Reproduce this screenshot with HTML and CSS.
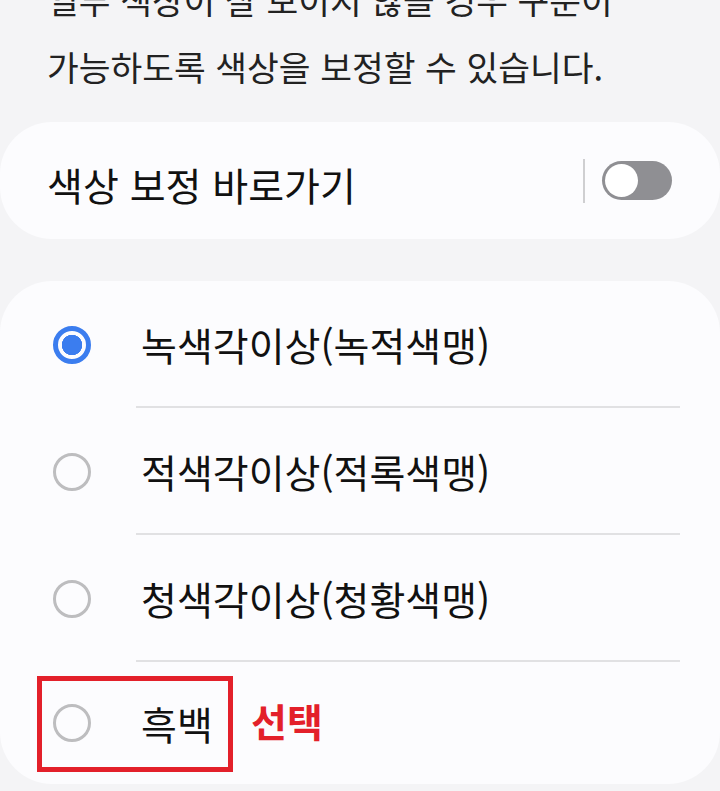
FILE: index.html
```html
<!DOCTYPE html>
<html lang="ko">
    <head>
        <title>색상 보정</title>
        <meta charset="utf-8">
        <link rel="stylesheet" href="styles.css">
    </head>
    <body>
        <p class="desc">일부 색상이 잘 보이지 않을 경우 구분이<br>가능하도록 색상을 보정할 수 있습니다.</p>

        <div class="card shortcut">
            <div class="shortcut_title">색상 보정 바로가기</div>
            <div class="sep"></div>
            <div class="switch"><div class="knob"></div></div>
        </div>

        <div class="card options">
            <div class="row">
                <div class="radio checked"></div>
                <div class="label">녹색각이상(녹적색맹)</div>
            </div>
            <div class="row">
                <div class="radio"></div>
                <div class="label">적색각이상(적록색맹)</div>
            </div>
            <div class="row">
                <div class="radio"></div>
                <div class="label">청색각이상(청황색맹)</div>
            </div>
            <div class="row last">
                <div class="radio"></div>
                <div class="label">흑백</div>
                <!-- 표시용 -->
                <div class="mark_box"></div>
                <div class="mark_text">선택</div>
            </div>
        </div>
    </body>
</html>
```

FILE: styles.css
```css
body{
    margin: 0;
    background-color: #f4f4f6;
    font-family: "Noto Sans CJK KR", "Noto Sans", sans-serif;
    color: #111;
    overflow: hidden;
}

p.desc{
    margin: -34px 0 0 0;
    padding: 0 0 0 47px;
    font-size: 34.5px;
    line-height: 67px;
    color: #222;
    white-space: nowrap;
}

div.card{
    background-color: #fcfcfe;
    border-radius: 52px;
}

/*바로가기*/
div.shortcut{
    margin-top: 22px;
    height: 117px;
    padding: 0 48px 0 47px;
    display: flex;
    align-items: center;
}
div.shortcut_title{
    flex: 1;
    font-size: 39px;
    padding-top: 6px;
}
div.sep{
    width: 2px;
    height: 44px;
    background-color: #cfcfd1;
    margin-right: 17px;
}
div.switch{
    width: 70px;
    height: 39px;
    border-radius: 20px;
    background-color: #8f8f93;
    box-sizing: border-box;
    padding: 3px;
}
div.knob{
    width: 33px;
    height: 33px;
    border-radius: 50%;
    background-color: #fff;
}

/*목록*/
div.options{
    margin-top: 42px;
}
div.row{
    height: 127px;
    padding-left: 53px;
    display: flex;
    align-items: center;
    position: relative;
}
div.row.last{
    height: 122px;
}
div.radio{
    width: 38px;
    height: 38px;
    box-sizing: border-box;
    border-radius: 50%;
    border: 3px solid #bdbdbf;
    margin-right: 45px;
}
div.radio.checked{
    border: 5px solid #3b7def;
    background: radial-gradient(circle, #3b7def 0 10px, transparent 10.5px);
}
div.label{
    flex: 1;
    align-self: stretch;
    margin-right: 40px;
    padding-left: 5px;
    display: flex;
    align-items: center;
    font-size: 39px;
    border-bottom: 2px solid #e1e1e3;
}
div.row.last div.label{
    border-bottom: none;
}

div.mark_box{
    position: absolute;
    left: 37px;
    top: 14px;
    width: 196px;
    height: 96px;
    box-sizing: border-box;
    border: 5px solid #e3202a;
}
div.mark_text{
    position: absolute;
    left: 251px;
    top: 30px;
    font-size: 39px;
    font-weight: bold;
    color: #e3202a;
}
```
